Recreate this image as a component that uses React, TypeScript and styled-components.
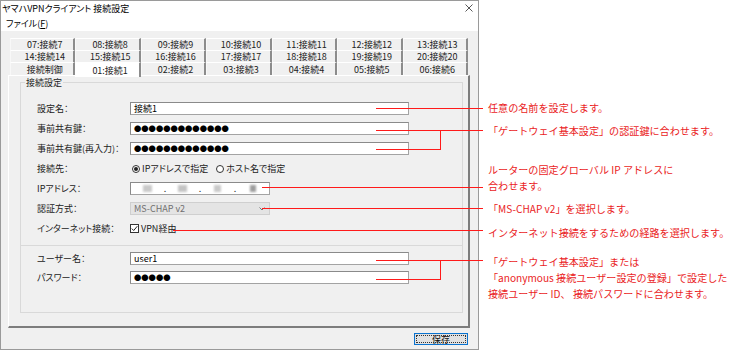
import React from "react";
import styled, { createGlobalStyle } from "styled-components";

const Global = createGlobalStyle`
  html, body { margin: 0; padding: 0; background: #fff; }
  body { font-family: "Noto Sans CJK JP", "Noto Sans", sans-serif; }
  * { box-sizing: border-box; }
`;

const Stage = styled.div`
  position: relative;
  width: 749px;
  height: 351px;
  display: flex;
  align-items: flex-start;
  overflow: hidden;
`;

const Window = styled.div`
  width: 479px;
  height: 350px;
  border: 1px solid #9a9a9a;
  background: #f0f0f0;
  display: flex;
  flex-direction: column;
  font-family: "Noto Sans CJK JP", sans-serif;
  font-size: 9px;
  font-feature-settings: "palt";
  color: #000;
  flex-shrink: 0;
`;

const TitleBar = styled.div`
  height: 14px;
  background: #fff;
  display: flex;
  align-items: center;
  justify-content: space-between;
  padding: 0 5px 0 1px;
  line-height: 1;
`;

const CloseIcon = styled.svg`
  width: 8px;
  height: 8px;
  display: block;
`;

const MenuBar = styled.div`
  height: 16px;
  background: #fff;
  display: flex;
  align-items: center;
  padding: 1px 0 0 5px;
  line-height: 1;
`;

const Accel = styled.span`
  text-decoration: underline;
`;

const Body = styled.div`
  flex: 1;
  display: flex;
  flex-direction: column;
  padding: 7px 8px 0 7px;
`;

const TabRows = styled.div`
  display: flex;
  flex-direction: column;
  margin: 0 2px 0 2px;
  position: relative;
  z-index: 1;
`;

const TabRow = styled.div<{ $h: number }>`
  display: flex;
  height: ${(p) => p.$h}px;
`;

const Tab = styled.div<{ $active?: boolean }>`
  flex: 1;
  display: flex;
  align-items: center;
  justify-content: center;
  padding-left: 5px;
  line-height: 1;
  white-space: nowrap;
  color: #222;
  background: ${(p) => (p.$active ? "#fff" : "#f0f0f0")};
  border-top: 1px solid #fff;
  border-left: 1px solid ${(p) => (p.$active ? "#fff" : "#f8f8f8")};
  border-right: 2px solid #8c8c8c;
  margin-bottom: ${(p) => (p.$active ? "-2px" : "0")};
  height: ${(p) => (p.$active ? "calc(100% + 2px)" : "100%")};
`;

const Panel = styled.div`
  flex: 1;
  display: flex;
  flex-direction: column;
  border-top: 1px solid #fff;
  border-left: 1px solid #fff;
  border-right: 2px solid #7d7d7d;
  border-bottom: 2px solid #7d7d7d;
`;

const Group = styled.fieldset`
  margin: 1px 5px 0 11px;
  padding: 0;
  border: 1px solid #d9d9d9;
  min-width: 0;
`;

const Legend = styled.legend`
  margin-left: 4px;
  padding: 0 1px;
  font-size: 9px;
  line-height: 11px;
  color: #222;
`;

const Section = styled.div<{ $pt: number; $pb: number; $gap: number }>`
  display: flex;
  flex-direction: column;
  gap: ${(p) => p.$gap}px;
  padding-top: ${(p) => p.$pt}px;
  padding-bottom: ${(p) => p.$pb}px;
`;

const Divider = styled.div`
  border-top: 1px solid #d9d9d9;
  margin-top: 10px;
`;

const Row = styled.div`
  display: grid;
  grid-template-columns: 93px 1fr;
  align-items: center;
  height: 13px;
  padding-left: 16px;
`;

const Label = styled.div`
  line-height: 1;
  white-space: nowrap;
  color: #222;
`;

const TextBox = styled.div<{ $w?: number }>`
  width: ${(p) => p.$w ?? 279}px;
  height: 13px;
  background: #fff;
  border: 1px solid #a3a3a3;
  border-top-color: #8a8a8a;
  border-left-color: #8a8a8a;
  display: flex;
  align-items: center;
  padding-left: 3px;
  line-height: 1;
  overflow: hidden;
`;

const Dots = styled.span`
  font-size: 7.3px;
  line-height: 1;
  color: #000;
  font-feature-settings: normal;
  letter-spacing: 0;
`;

const IpBox = styled(TextBox)`
  padding: 0 1px;
`;

const Octet = styled.div`
  flex: 1;
  display: flex;
  justify-content: center;
  align-items: center;
`;

const Blur = styled.span<{ $w: number; $c: string }>`
  width: ${(p) => p.$w}px;
  height: 7px;
  background: ${(p) => p.$c};
  filter: blur(0.8px);
`;

const IpDot = styled.span`
  width: 4px;
  text-align: center;
  line-height: 1;
  color: #333;
`;

const SelectBox = styled.div`
  width: 140px;
  height: 13px;
  background: #e4e4e4;
  border: 1px solid #cfcfcf;
  display: flex;
  align-items: center;
  justify-content: space-between;
  padding: 0 4px 0 3px;
  color: #707070;
  line-height: 1;
`;

const Options = styled.div`
  display: flex;
  align-items: center;
  gap: 6px;
`;

const Choice = styled.label`
  display: flex;
  align-items: center;
  gap: 2px;
  line-height: 1;
  white-space: nowrap;
  color: #222;
`;

const Radio = styled.span<{ $on?: boolean }>`
  width: 8px;
  height: 8px;
  border-radius: 50%;
  border: 1px solid #333;
  background: #fff;
  display: flex;
  align-items: center;
  justify-content: center;
  margin-left: 2px;
  &::after {
    content: "";
    width: 4px;
    height: 4px;
    border-radius: 50%;
    background: ${(p) => (p.$on ? "#222" : "transparent")};
  }
`;

const Check = styled.span`
  width: 9px;
  height: 9px;
  border: 1px solid #333;
  background: #fff;
  display: flex;
  align-items: center;
  justify-content: center;
`;

const Footer = styled.div`
  height: 21px;
  display: flex;
  justify-content: flex-end;
  padding: 5px 2px 4px 0;
`;

const Button = styled.button`
  width: 54px;
  height: 12px;
  padding: 0;
  border: 1px solid #0a73d0;
  background: #e1e1e1;
  font-family: inherit;
  font-size: 9px;
  font-feature-settings: "palt";
  color: #111;
  line-height: 1;
  display: flex;
  align-items: center;
  justify-content: center;
  outline: 1px dotted #333;
  outline-offset: -3px;
`;

const Notes = styled.div`
  display: flex;
  flex-direction: column;
  padding-top: 100px;
  margin-left: 9px;
  font-family: "Noto Sans CJK JP", sans-serif;
  font-size: 10.1px;
  line-height: 16px;
  color: #ea1c24;
  white-space: nowrap;
`;

const Note = styled.div<{ $mt: number }>`
  margin-top: ${(p) => p.$mt}px;
`;

const Overlay = styled.svg`
  position: absolute;
  left: 0;
  top: 0;
  width: 749px;
  height: 351px;
  pointer-events: none;
`;

const row1 = ["07:接続7", "08:接続8", "09:接続9", "10:接続10", "11:接続11", "12:接続12", "13:接続13"];
const row2 = ["14:接続14", "15:接続15", "16:接続16", "17:接続17", "18:接続18", "19:接続19", "20:接続20"];
const row3 = ["接続制御", "01:接続1", "02:接続2", "03:接続3", "04:接続4", "05:接続5", "06:接続6"];

const lines: [number, number, number, number][] = [
  [376, 108.5, 483, 108.5],
  [376, 130.5, 483, 130.5],
  [376, 149.5, 441, 149.5],
  [440.5, 130, 440.5, 150],
  [262, 187.5, 483, 187.5],
  [262, 208.5, 483, 208.5],
  [173, 230.5, 483, 230.5],
  [376, 260.5, 483, 260.5],
  [376, 279.5, 441, 279.5],
  [440.5, 260, 440.5, 280],
];

export default function App() {
  return (
    <>
      <Global />
      <Stage>
        <Window>
          <TitleBar>
            <span>ヤマハVPNクライアント 接続設定</span>
            <CloseIcon viewBox="0 0 8 8">
              <path d="M0.5 0.5 L7.5 7.5 M7.5 0.5 L0.5 7.5" stroke="#444" strokeWidth="0.9" />
            </CloseIcon>
          </TitleBar>
          <MenuBar>
            <span>
              ファイル(<Accel>F</Accel>)
            </span>
          </MenuBar>
          <Body>
            <TabRows>
              <TabRow $h={12}>
                {row1.map((t) => (
                  <Tab key={t}>{t}</Tab>
                ))}
              </TabRow>
              <TabRow $h={12}>
                {row2.map((t) => (
                  <Tab key={t}>{t}</Tab>
                ))}
              </TabRow>
              <TabRow $h={13}>
                {row3.map((t) => (
                  <Tab key={t} $active={t === "01:接続1"}>
                    {t}
                  </Tab>
                ))}
              </TabRow>
            </TabRows>
            <Panel>
              <Group>
                <Legend>接続設定</Legend>
                <Section $pt={14} $pb={0} $gap={7}>
                  <Row>
                    <Label>設定名：</Label>
                    <TextBox>接続1</TextBox>
                  </Row>
                  <Row>
                    <Label>事前共有鍵：</Label>
                    <TextBox>
                      <Dots>●●●●●●●●●●●●●</Dots>
                    </TextBox>
                  </Row>
                  <Row>
                    <Label>事前共有鍵(再入力)：</Label>
                    <TextBox>
                      <Dots>●●●●●●●●●●●●●</Dots>
                    </TextBox>
                  </Row>
                  <Row>
                    <Label>接続先：</Label>
                    <Options>
                      <Choice>
                        <Radio $on />
                        IPアドレスで指定
                      </Choice>
                      <Choice>
                        <Radio />
                        ホスト名で指定
                      </Choice>
                    </Options>
                  </Row>
                  <Row>
                    <Label>IPアドレス：</Label>
                    <IpBox $w={140}>
                      <Octet>
                        <Blur $w={9} $c="#c9c9c9" />
                      </Octet>
                      <IpDot>.</IpDot>
                      <Octet>
                        <Blur $w={9} $c="#c4c4c4" />
                      </Octet>
                      <IpDot>.</IpDot>
                      <Octet>
                        <Blur $w={7} $c="#c9c9c9" />
                      </Octet>
                      <IpDot>.</IpDot>
                      <Octet>
                        <Blur $w={6} $c="#9d9d9d" />
                      </Octet>
                    </IpBox>
                  </Row>
                  <Row>
                    <Label>認証方式：</Label>
                    <SelectBox>
                      <span>MS-CHAP v2</span>
                      <svg width="6" height="4" viewBox="0 0 6 4">
                        <path d="M0.5 0.5 L3 3 L5.5 0.5" stroke="#777" strokeWidth="1" fill="none" />
                      </svg>
                    </SelectBox>
                  </Row>
                  <Row>
                    <Label>インターネット接続：</Label>
                    <Choice>
                      <Check>
                        <svg width="7" height="7" viewBox="0 0 7 7">
                          <path d="M0.8 3.6 L2.7 5.5 L6.3 1.2" stroke="#222" strokeWidth="1" fill="none" />
                        </svg>
                      </Check>
                      VPN経由
                    </Choice>
                  </Row>
                </Section>
                <Divider />
                <Section $pt={6} $pb={28} $gap={6}>
                  <Row>
                    <Label>ユーザー名：</Label>
                    <TextBox>user1</TextBox>
                  </Row>
                  <Row>
                    <Label>パスワード：</Label>
                    <TextBox>
                      <Dots>●●●●●</Dots>
                    </TextBox>
                  </Row>
                </Section>
              </Group>
            </Panel>
            <Footer>
              <Button>保存</Button>
            </Footer>
          </Body>
        </Window>
        <Notes>
          <Note $mt={0}>任意の名前を設定します。</Note>
          <Note $mt={7}>「ゲートウェイ基本設定」の認証鍵に合わせます。</Note>
          <Note $mt={23}>
            ルーターの固定グローバル IP アドレスに
            <br />
            合わせます。
          </Note>
          <Note $mt={7}>「MS-CHAP v2」を選択します。</Note>
          <Note $mt={8}>インターネット接続をするための経路を選択します。</Note>
          <Note $mt={13}>
            「ゲートウェイ基本設定」または
            <br />
            「anonymous 接続ユーザー設定の登録」で設定した
            <br />
            接続ユーザー ID、 接続パスワードに合わせます。
          </Note>
        </Notes>
        <Overlay viewBox="0 0 749 351">
          {lines.map(([x1, y1, x2, y2], i) => (
            <line key={i} x1={x1} y1={y1} x2={x2} y2={y2} stroke="#ff1a1a" strokeWidth="1" />
          ))}
        </Overlay>
      </Stage>
    </>
  );
}
